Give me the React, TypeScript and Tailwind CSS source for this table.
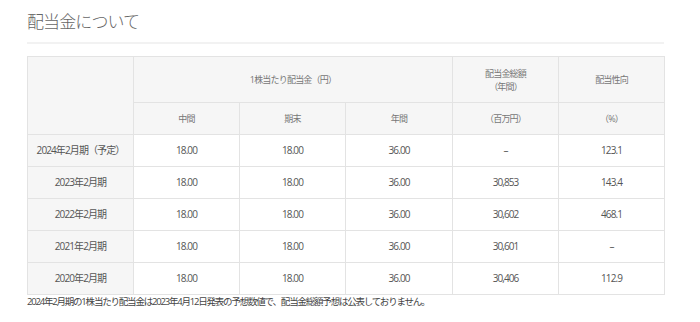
const rows = [
  { label: "2024年2月期（予定）", mid: "18.00", end: "18.00", year: "36.00", total: "–", ratio: "123.1" },
  { label: "2023年2月期", mid: "18.00", end: "18.00", year: "36.00", total: "30,853", ratio: "143.4" },
  { label: "2022年2月期", mid: "18.00", end: "18.00", year: "36.00", total: "30,602", ratio: "468.1" },
  { label: "2021年2月期", mid: "18.00", end: "18.00", year: "36.00", total: "30,601", ratio: "–" },
  { label: "2020年2月期", mid: "18.00", end: "18.00", year: "36.00", total: "30,406", ratio: "112.9" },
];

const th = "border border-[#e3e3e3] bg-[#f6f6f6] font-normal text-[#777] text-[9px] tracking-[-0.8px] text-center align-middle";
const td = "border border-[#e3e3e3] text-[#555] text-[10px] tracking-[-0.9px] text-center align-middle h-[32px]";

export default function App() {
  return (
    <div
      className="w-[700px] h-[322px] bg-white overflow-hidden"
      style={{ fontFamily: '"Open Sans", "Noto Sans CJK JP", sans-serif' }}
    >
      <div className="ml-[27px] w-[637px]">
        {/* Title */}
        <div className="h-[44px] border-b-2 border-[#f2f2f2] pt-[10px]">
          <h2 className="text-[17px] leading-[24px] tracking-[-0.9px] text-[#666] font-light">
            配当金について
          </h2>
        </div>

        {/* Dividend table */}
        <table className="mt-[12px] w-[637px] border-collapse table-fixed">
          <colgroup>
            <col className="w-[106px]" />
            <col className="w-[106px]" />
            <col className="w-[106px]" />
            <col className="w-[107px]" />
            <col className="w-[106px]" />
            <col className="w-[106px]" />
          </colgroup>
          <thead>
            <tr className="h-[46px]">
              <th rowSpan={2} className={th}></th>
              <th colSpan={3} className={th}>1株当たり配当金（円）</th>
              <th className={`${th} leading-[13px]`}>
                配当金総額
                <br />
                （年間）
              </th>
              <th className={th}>配当性向</th>
            </tr>
            <tr className="h-[32px]">
              <th className={th}>中間</th>
              <th className={th}>期末</th>
              <th className={th}>年間</th>
              <th className={th}>（百万円）</th>
              <th className={th}>（%）</th>
            </tr>
          </thead>
          <tbody>
            {rows.map((r) => (
              <tr key={r.label}>
                <td className={`${td} bg-[#f6f6f6] text-[9.5px]`}>{r.label}</td>
                <td className={td}>{r.mid}</td>
                <td className={td}>{r.end}</td>
                <td className={td}>{r.year}</td>
                <td className={td}>{r.total}</td>
                <td className={td}>{r.ratio}</td>
              </tr>
            ))}
          </tbody>
        </table>

        {/* Footnote */}
        <p className="text-[9.5px] leading-[14px] tracking-[-1.2px] text-[#444] whitespace-nowrap">
          2024年2月期の1株当たり配当金は2023年4月12日発表の予想数値で、配当金総額予想は公表しておりません。
        </p>
      </div>
    </div>
  );
}
